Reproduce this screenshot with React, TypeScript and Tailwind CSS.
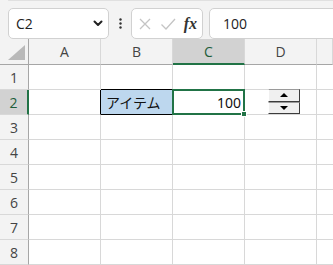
import React from "react";

const ui = { fontFamily: '"Open Sans", "Noto Sans", sans-serif' };
const cellFont = { fontFamily: '"Noto Sans", "Noto Sans CJK JP", sans-serif' };

const cols = ["A", "B", "C", "D", ""];

function HeaderRow() {
  return (
    <div className="flex h-[26px]">
      <div className="w-[29px] shrink-0 border-r border-b border-[#a6a6a6] bg-[#f3f3f3] flex items-end justify-end pr-[3px] pb-[4px]">
        <svg width="17" height="15" viewBox="0 0 17 15">
          <polygon points="17,0 17,15 0,15" fill="#b9b9b9" />
        </svg>
      </div>
      {cols.map((c, i) => {
        const sel = c === "C";
        return (
          <div
            key={i}
            className={
              (i === 4 ? "flex-1 " : "w-[72px] shrink-0 ") +
              (sel
                ? "bg-[#d2d2d2] border-b-2 border-b-[#217346] text-[#1e5e3a] "
                : "bg-[#f3f3f3] border-b border-b-[#a6a6a6] text-[#444444] ") +
              "border-r border-r-[#d8d8d8] flex items-center justify-center text-[14px]"
            }
            style={ui}
          >
            {c}
          </div>
        );
      })}
    </div>
  );
}

function RowHeader({ n, sel }: { n: number; sel?: boolean }) {
  return (
    <div
      className={
        "w-[29px] shrink-0 flex items-center justify-center text-[14px] border-b border-b-[#d8d8d8] " +
        (sel
          ? "bg-[#d2d2d2] text-[#1e5e3a] border-r-2 border-r-[#217346]"
          : "bg-[#f3f3f3] text-[#444444] border-r border-r-[#a6a6a6]")
      }
      style={ui}
    >
      {n}
    </div>
  );
}

function Cell({ className = "", children }: { className?: string; children?: React.ReactNode }) {
  return (
    <div className={"w-[72px] shrink-0 border-r border-b border-[#d8d8d8] relative " + className}>
      {children}
    </div>
  );
}

function SpinButton() {
  const half =
    "h-[12.5px] bg-[#f0f0f0] border-t border-l border-t-[#9a9a9a] border-l-[#ffffff] border-r border-b border-r-[#3c3c3c] border-b-[#3c3c3c] flex items-center justify-center";
  return (
    <div className="absolute left-[23px] top-[-1px] w-[32px] flex flex-col">
      <div className={half}>
        <svg width="8" height="4" viewBox="0 0 8 4">
          <polygon points="4,0 8,4 0,4" fill="#000" />
        </svg>
      </div>
      <div className={half}>
        <svg width="8" height="4" viewBox="0 0 8 4">
          <polygon points="0,0 8,0 4,4" fill="#000" />
        </svg>
      </div>
    </div>
  );
}

export default function App() {
  return (
    <div className="w-[333px] h-[265px] overflow-hidden bg-[#f3f3f3] flex flex-col">
      <div className="h-[3px] ml-[8px] bg-white rounded-bl-[4px] border-b border-l border-[#e0e0e0]" />
      <div className="h-[44px] flex items-start pt-[7px] pl-[8px] gap-0">
        <div
          className="w-[101px] h-[31px] bg-white border border-[#d1d1d1] rounded-[5px] flex items-center justify-between pl-[7px] pr-[5px] text-[14px] text-[#222]"
          style={ui}
        >
          <span>C2</span>
          <svg width="10" height="7" viewBox="0 0 10 7">
            <polyline points="1.5,1.5 5,5 8.5,1.5" fill="none" stroke="#222" strokeWidth="2" strokeLinecap="round" strokeLinejoin="round" />
          </svg>
        </div>
        <div className="w-[22px] h-[31px] flex items-center justify-center">
          <svg width="3" height="11" viewBox="0 0 3 11">
            <circle cx="1.5" cy="1.5" r="1.2" fill="#333" />
            <circle cx="1.5" cy="5.5" r="1.2" fill="#333" />
            <circle cx="1.5" cy="9.5" r="1.2" fill="#333" />
          </svg>
        </div>
        <div className="w-[72px] h-[31px] bg-white border border-[#d1d1d1] rounded-[5px] flex items-center justify-between pl-[6px] pr-[5px]">
          <svg width="14" height="14" viewBox="0 0 14 14">
            <path d="M2 2 L12 12 M12 2 L2 12" stroke="#c4c4c4" strokeWidth="1.3" fill="none" />
          </svg>
          <svg width="16" height="14" viewBox="0 0 16 14">
            <path d="M1.5 7.5 L6 12 L15 2" stroke="#c4c4c4" strokeWidth="1.3" fill="none" />
          </svg>
          <span
            className="text-[16px] italic font-semibold text-[#333] leading-none"
            style={{ fontFamily: '"Liberation Serif", "DejaVu Serif", serif' }}
          >
            fx
          </span>
        </div>
        <div className="w-[6px]" />
        <div
          className="flex-1 -mr-[10px] h-[31px] bg-white border border-[#d1d1d1] rounded-[5px] flex items-center pl-[13px] text-[14px] text-[#222]"
          style={ui}
        >
          100
        </div>
      </div>
      <div className="flex flex-col bg-white flex-1">
        <HeaderRow />
        {[1, 2, 3, 4, 5, 6, 7, 8].map((r) => (
          <div key={r} className={"flex h-[25px] shrink-0 " + (r === 2 ? "relative z-10" : "")}>
            <RowHeader n={r} sel={r === 2} />
            {r === 2 ? (
              <>
                <Cell className="!border-r-black" />
                <Cell className="bg-[#bdd7ee] !border-b-black flex items-center pl-[5px]">
                  <span className="text-[14px] text-[#111]" style={cellFont}>
                    アイテム
                  </span>
                </Cell>
                <Cell className="flex items-center justify-end pr-[3px]">
                  <span className="text-[14px] text-[#111]" style={cellFont}>
                    100
                  </span>
                  <div className="absolute -left-[1px] -top-[1px] -right-[1px] -bottom-[1px] border-2 border-[#217346] pointer-events-none" />
                  <div className="absolute -right-[3px] -bottom-[3px] w-[6px] h-[6px] bg-[#217346] border border-white z-20" />
                </Cell>
                <Cell>
                  <SpinButton />
                </Cell>
                <div className="flex-1 border-b border-[#d8d8d8]" />
              </>
            ) : (
              <>
                <Cell />
                <Cell className={r === 1 ? "!border-b-black" : ""} />
                <Cell />
                <Cell />
                <div className="flex-1 border-b border-[#d8d8d8]" />
              </>
            )}
          </div>
        ))}
      </div>
    </div>
  );
}
